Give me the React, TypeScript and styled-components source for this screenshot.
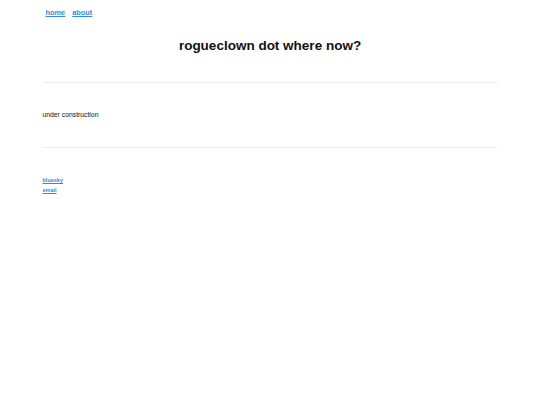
import React from "react";
import styled, { createGlobalStyle } from "styled-components";

const Global = createGlobalStyle`
  html, body { margin: 0; padding: 0; background: #fff; }
  body { font-family: "Liberation Sans", Arial, sans-serif; color: #111; }
`;

const Page = styled.div`
  width: 455px;
  margin: 0 auto;
`;

const Nav = styled.nav`
  display: flex;
  gap: 7px;
  padding: 4px 0 0 3px;
  height: 16px;
  align-items: center;
`;

const NavLink = styled.a`
  font-size: 7.4px;
  font-weight: bold;
  color: #3389e3;
  text-decoration: underline;
`;

const Title = styled.h1`
  margin: 18px 0 0;
  text-align: center;
  font-size: 13.5px;
  font-weight: bold;
  line-height: 16px;
`;

const Rule = styled.hr<{ $top: number }>`
  border: 0;
  border-top: 1px solid #eeeeee;
  margin: ${(p) => p.$top}px 0 0;
`;

const Body = styled.p`
  margin: 27px 0 0;
  font-size: 6.8px;
  line-height: 9px;
`;

const Footer = styled.div`
  display: flex;
  flex-direction: column;
  gap: 2px;
  margin-top: 28px;
`;

const FootLink = styled.a`
  font-size: 5.5px;
  font-weight: bold;
  color: #3389e3;
  text-decoration: underline;
  line-height: 8px;
`;

export default function App() {
  return (
    <>
      <Global />
      <Page>
        <Nav>
          <NavLink href="#">home</NavLink>
          <NavLink href="#">about</NavLink>
        </Nav>
        <Title>rogueclown dot where now?</Title>
        <Rule $top={28} />
        <Body>under construction</Body>
        <Rule $top={28} />
        <Footer>
          <FootLink href="#">bluesky</FootLink>
          <FootLink href="#">email</FootLink>
        </Footer>
      </Page>
    </>
  );
}
